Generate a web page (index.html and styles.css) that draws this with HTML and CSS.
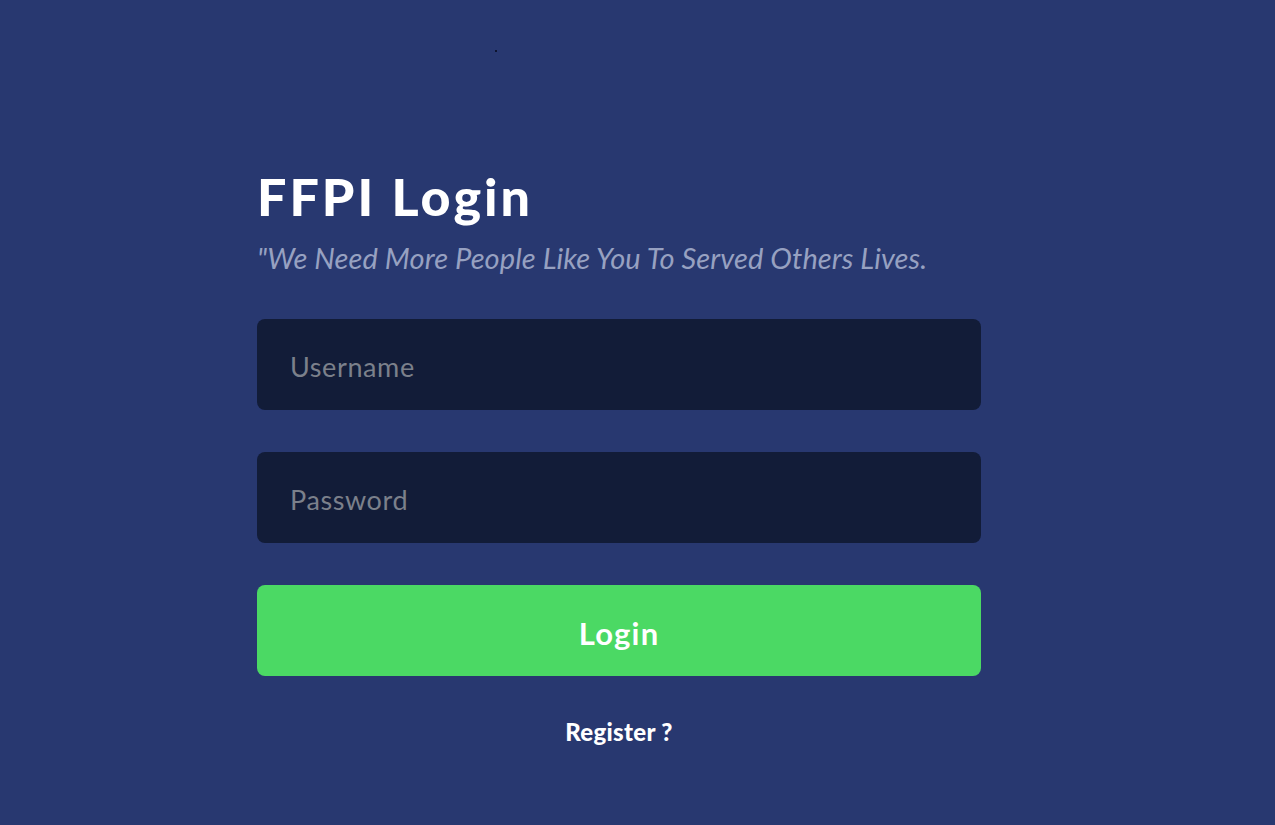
FILE: index.html
```html
<!DOCTYPE html>
<html>
<head>
<meta charset="utf-8">
<title>FFPI Login</title>
<link rel="stylesheet" href="styles.css">
</head>
<body>
<div class="page">
  <span class="speck"></span>
  <form class="login">
    <h1 class="title">FFPI Login</h1>
    <p class="tagline">"We Need More People Like You To Served Others Lives.</p>
    <input class="field" type="text" placeholder="Username">
    <input class="field" type="password" placeholder="Password">
    <button class="btn" type="button">Login</button>
    <a class="register" href="#">Register ?</a>
  </form>
</div>
</body>
</html>
```

FILE: styles.css
```css
* { box-sizing: border-box; }
html, body { margin: 0; padding: 0; }
body {
  background: #283870;
  font-family: Lato, "Open Sans", "Liberation Sans", sans-serif;
  min-height: 825px;
}
.page {
  position: relative;
  padding: 160px 0 0 257px;
}
.speck {
  position: absolute;
  left: 495px;
  top: 50px;
  width: 2px;
  height: 2px;
  background: #0d1430;
}
.login {
  width: 724px;
  display: flex;
  flex-direction: column;
}
.title {
  margin: 0;
  color: #ffffff;
  font-size: 52px;
  font-weight: 900;
  line-height: 72px;
  letter-spacing: 3px;
}
.tagline {
  margin: 0 0 35px 0;
  color: #97a1c1;
  font-size: 29px;
  font-style: italic;
  line-height: 52px;
  letter-spacing: 0.1px;
}
.field {
  height: 91px;
  border: none;
  border-radius: 8px;
  background: #121c38;
  color: #fff;
  font-family: inherit;
  font-size: 27px;
  letter-spacing: 0.6px;
  padding: 4px 33px 0 33px;
  margin-bottom: 42px;
  outline: none;
}
.field::placeholder { color: #7b808b; }
.btn {
  height: 91px;
  border: none;
  border-radius: 8px;
  background: #4bd964;
  color: #ffffff;
  font-family: inherit;
  font-size: 31px;
  font-weight: 700;
  letter-spacing: 1.2px;
  padding-top: 5px;
  cursor: pointer;
}
.register {
  align-self: center;
  margin-top: 41px;
  color: #ffffff;
  font-size: 24px;
  font-weight: 900;
  letter-spacing: 0.3px;
  text-decoration: none;
}
```
